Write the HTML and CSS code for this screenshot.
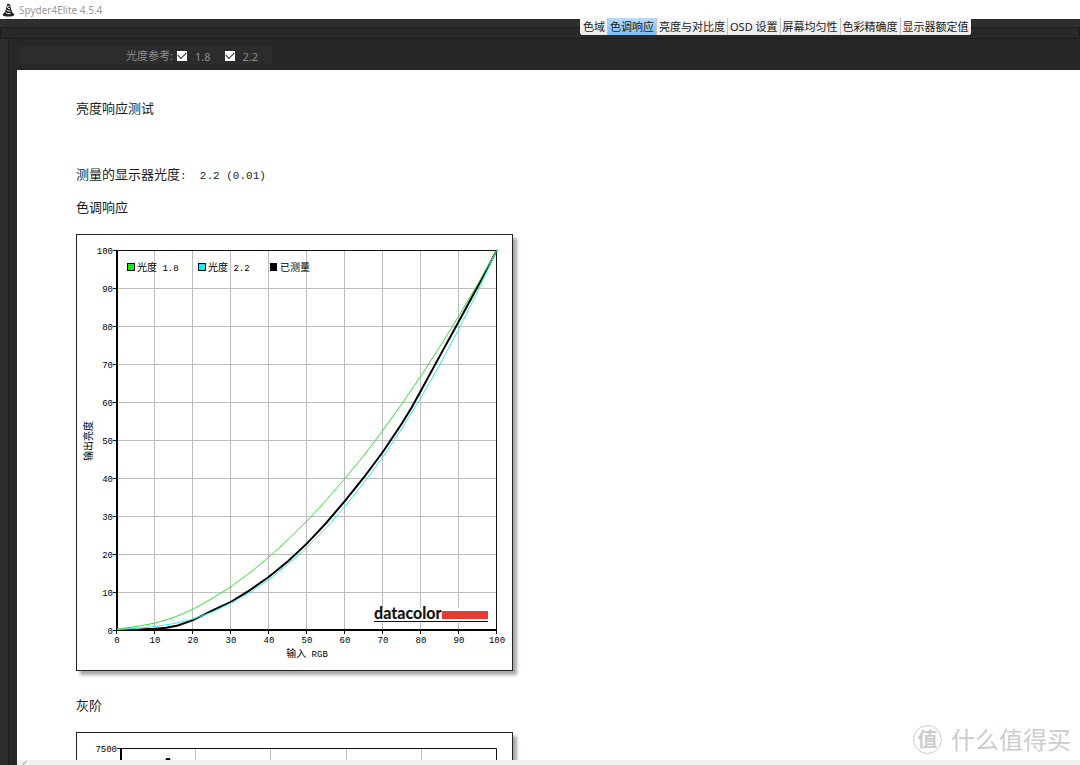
FILE: index.html
```html
<!DOCTYPE html>
<html lang="zh-CN">
<head>
<meta charset="utf-8">
<title>Spyder4Elite 4.5.4</title>
<link rel="stylesheet" href="styles.css">
</head>
<body>
<header class="titlebar">
  <svg class="app-icon" viewBox="0 0 13 14" aria-hidden="true">
    <path d="M5 1.5Q6.500 0 8 1.500L9 5.500L10 9L12.500 11.500Q12 13.500 6.500 13.500T.5 11.500L3 9L4 5.500Z" fill="#222"/>
    <path d="M7.500 3.200Q5 3 5.200 4.200T8 5.800M4.500 6.800Q5 8 8.500 8.200M3.700 9.500Q5 11.300 8.500 10.700" fill="none" stroke="#fff" stroke-width="1"/>
  </svg>
  <span>Spyder4Elite 4.5.4</span>
</header>
<nav class="tabs">
  <button type="button" class="tab">色域</button>
  <button type="button" class="tab tab-active" aria-current="page">色调响应</button>
  <button type="button" class="tab">亮度与对比度</button>
  <button type="button" class="tab">OSD 设置</button>
  <button type="button" class="tab">屏幕均匀性</button>
  <button type="button" class="tab">色彩精确度</button>
  <button type="button" class="tab">显示器额定值</button>
</nav>
<div class="band"></div>
<div class="strip"></div>
<div class="workspace">
  <div class="panel">
    <form class="toolbar">
      <span>光度参考:</span>
      <label class="option"><input type="checkbox" class="check" checked><span class="value">1.8</span></label>
      <label class="option"><input type="checkbox" class="check" checked><span class="value">2.2</span></label>
    </form>
    <main class="report">
      <h1 class="line title">亮度响应测试</h1>
      <p class="line measured">测量的显示器光度<span class="mono">:  2.2 (0.01)</span></p>
      <h2 class="line">色调响应</h2>
      <svg class="chart" width="437" height="437" viewBox="0 0 437 437" role="img" aria-label="色调响应">
        <rect class="frame" x=".5" y=".5" width="436" height="436"/>
        <path class="grid" d="M78.500 17V396M116.500 17V396M154.500 17V396M192.500 17V396M230.500 17V396M268.500 17V396M306.500 17V396M344.500 17V396M382.500 17V396M41 54.500H420M41 92.500H420M41 130.500H420M41 168.500H420M41 206.500H420M41 244.500H420M41 282.500H420M41 320.500H420M41 358.500H420"/>
        <path class="axis-thin" d="M41 16.500H420.500V396M37 16.500H41M37 54.500H41M37 92.500H41M37 130.500H41M37 168.500H41M37 206.500H41M37 244.500H41M37 282.500H41M37 320.500H41M37 358.500H41M37 396.500H41M40.500 396V400M78.500 396V400M116.500 396V400M154.500 396V400M192.500 396V400M230.500 396V400M268.500 396V400M306.500 396V400M344.500 396V400M382.500 396V400M420.500 396V400"/>
        <path class="axis" d="M41 16V396H421"/>
        <rect class="logo-back" x="297" y="374" width="118" height="15"/>
        <g transform="translate(41 396) scale(3.8 -3.8)">
          <polyline class="curve measured-curve" points="0,0 5,.1 10,.3 13,.6 16,1.2 20,2.600 25,5.100 30,7.400 35,10.500 40,14 45,18.100 50,22.800 55,28.100 60,34 65,40.200 70,46.900 75,54.400 77.500,58.500 80,63 85,72.200 90,81.300 95,90.500 100,100"/>
          <polyline class="curve curve-22" points="0,.1 5,.4 10,.9 15,1.700 20,2.900 25,4.700 30,7.100 35,9.900 40,13.300 45,17.300 50,21.800 55,26.800 60,32.500 65,38.800 70,45.600 75,53.100 80,61.200 85,69.900 90,79.300 95,89.300 100,100"/>
          <polyline class="curve curve-18" points="0,.2 5,.9 10,1.800 15,3.300 20,5.500 25,8.300 30,11.400 35,15.100 40,19.200 45,23.800 50,28.700 55,34.100 60,39.900 65,46 70,52.600 75,59.600 80,66.900 85,74.600 90,82.700 95,91.200 100,100"/>
        </g>
        <g class="label end">
          <text x="37" y="20">100</text><text x="37" y="58">90</text><text x="37" y="96">80</text><text x="37" y="134">70</text><text x="37" y="172">60</text><text x="37" y="210">50</text><text x="37" y="248">40</text><text x="37" y="286">30</text><text x="37" y="324">20</text><text x="37" y="362">10</text><text x="37" y="400">0</text>
        </g>
        <g class="label middle">
          <text x="41" y="409">0</text><text x="79" y="409">10</text><text x="117" y="409">20</text><text x="155" y="409">30</text><text x="193" y="409">40</text><text x="231" y="409">50</text><text x="269" y="409">60</text><text x="307" y="409">70</text><text x="345" y="409">80</text><text x="383" y="409">90</text><text x="421" y="409">100</text>
          <text x="231" y="423"><tspan class="cjk">输入</tspan> RGB</text>
          <text class="cjk" transform="translate(16 207) rotate(-90)">输出亮度</text>
        </g>
        <g class="label">
          <rect class="key key-18" x="51.500" y="29.500" width="7" height="7"/>
          <text x="61" y="37"><tspan class="cjk">光度</tspan> 1.8</text>
          <rect class="key key-22" x="122.500" y="29.500" width="7" height="7"/>
          <text x="132" y="37"><tspan class="cjk">光度</tspan> 2.2</text>
          <rect class="key" x="194.500" y="29.500" width="6" height="7"/>
          <text class="cjk" x="204" y="37">已测量</text>
        </g>
        <text class="logo" x="298" y="385">datacolor</text>
        <rect class="logo-bar" x="366" y="377" width="46" height="8"/>
        <path class="axis-thin" d="M298 387.500H412"/>
      </svg>
      <h2 class="line next">灰阶</h2>
      <svg class="chart" width="437" height="437" viewBox="0 0 437 437" role="img" aria-label="灰阶">
        <rect class="frame" x=".5" y=".5" width="436" height="436"/>
        <path class="grid" d="M119.500 17V396M194.500 17V396M270.500 17V396M345.500 17V396"/>
        <path class="axis-thin" d="M41 16.500H420.500V396"/>
        <path class="axis" d="M45 16V396"/>
        <path class="curve measured-curve" d="M84 40L91 27H93L100 40"/>
        <text class="label end" x="41" y="20">7500</text>
      </svg>
    </main>
    <div class="scrollbar"><svg class="scroll-arrow" viewBox="0 0 8 8" aria-hidden="true"><path d="M6 1L2 4L6 7" fill="none" stroke="#aaa"/></svg></div>
  </div>
</div>
<div class="watermark"><span class="watermark-mark">值</span><span>什么值得买</span></div>
</body>
</html>
```

FILE: styles.css
```css
* { box-sizing: border-box; }
body {
  margin: 0;
  height: 100vh;
  display: flex;
  flex-direction: column;
  overflow: hidden;
  position: relative;
  background: #2e2e2e;
  font-family: "Noto Sans", "Noto Sans CJK SC", sans-serif;
}
.titlebar {
  flex: none;
  height: 19px;
  padding: 0 2px;
  display: flex;
  align-items: center;
  gap: 4px;
  background: #fff;
  color: #999;
  font-size: 10px;
}
.app-icon { width: 13px; height: 14px; }
.tabs {
  position: absolute;
  top: 18px;
  left: 580px;
  display: flex;
  height: 17px;
  padding-left: 1px;
  background: #f1f1f1;
  border-radius: 0 0 3px 3px;
  overflow: hidden;
}
.tab {
  border: 0;
  border-right: 1px solid #c4c4c4;
  padding: 0 2px;
  background: linear-gradient(#fafafa, #ececec);
  color: #1c1c1c;
  font: 11px/16px "Noto Sans", "Noto Sans CJK SC", sans-serif;
  white-space: nowrap;
}
.tab:last-child { border-right: 0; }
.tab-active { background: linear-gradient(#b9dcfa, #7fbcf5); }
.band { flex: none; height: 8px; background: #2e2e2e; }
.strip {
  flex: none;
  height: 12px;
  background: #282828;
  border: 1px solid #1d1d1d;
  border-radius: 2px;
}
.workspace {
  flex: 1;
  min-height: 0;
  padding-left: 8px;
  display: flex;
}
.panel {
  flex: 1;
  min-width: 0;
  padding-left: 8px;
  display: flex;
  flex-direction: column;
  background: #272727;
  border-left: 1px solid #1d1d1d;
}
.toolbar {
  flex: none;
  align-self: flex-start;
  margin: 8px 0 6px;
  height: 17px;
  padding: 0 14px 0 109px;
  display: flex;
  align-items: center;
  gap: 4px;
  background: #2c2c2c;
  color: #8c8c8c;
  font-size: 11px;
  line-height: 17px;
}
.option { display: flex; align-items: center; gap: 8px; margin-right: 10px; }
.option:last-child { margin-right: 0; }
.value { padding-top: 2px; }
.check {
  appearance: none;
  width: 10px;
  height: 10px;
  margin: 0;
  background: #fff;
  display: grid;
  place-items: center;
}
.check:checked::before {
  content: "";
  width: 7px;
  height: 4px;
  margin-bottom: 2px;
  border-left: 1px solid #222;
  border-bottom: 1px solid #222;
  transform: rotate(-45deg);
}
.report {
  flex: 1;
  min-height: 0;
  overflow: hidden;
  padding: 28px 59px 0;
  background: #fff;
  color: #1c1c1c;
}
.line {
  margin: 0 0 17px;
  font: 400 13px/20px "Noto Sans CJK SC", sans-serif;
}
.title { margin-bottom: 46px; }
.measured { margin-bottom: 13px; }
.next { margin-top: 24px; }
.mono { font: 11px/11px "Liberation Mono", monospace; white-space: pre; }
.chart { display: block; box-shadow: 4px 4px 3px #aaa; }
.frame { fill: #fff; stroke: #222; }
.grid { fill: none; stroke: #bdbdbd; }
.axis-thin { fill: none; stroke: #111; }
.axis { fill: none; stroke: #000; stroke-width: 2px; }
.curve { fill: none; stroke-width: 1px; vector-effect: non-scaling-stroke; }
.measured-curve { stroke: #000; stroke-width: 2px; }
.curve-22 { stroke: #2eeaf0; }
.curve-18 { stroke: #35e035; }
.label { font-family: "Liberation Mono", monospace; font-size: 9px; fill: #000; }
.cjk { font-family: "Noto Sans CJK SC", sans-serif; font-size: 10px; }
.end { text-anchor: end; }
.middle { text-anchor: middle; }
.key { stroke: #000; fill: #000; }
.key-18 { fill: #1be41b; }
.key-22 { fill: #12eef5; }
.logo-back { fill: #fff; }
.logo { font: 900 16px "Lato", sans-serif; fill: #161616; }
.logo-bar { fill: #e83a34; }
.scrollbar { flex: none; height: 5px; overflow: hidden; padding-left: 4px; background: #f0f0f0; }
.scroll-arrow { display: block; width: 8px; height: 8px; }
.watermark {
  position: absolute;
  right: 9px;
  bottom: 11px;
  display: flex;
  align-items: center;
  gap: 9px;
  color: #ccc;
  font: 24px/30px "Noto Sans CJK SC", sans-serif;
}
.watermark-mark {
  width: 29px;
  height: 29px;
  border: 1px solid #ccc;
  border-radius: 50%;
  font-size: 20px;
  font-weight: 700;
  line-height: 26px;
  text-align: center;
}
```
